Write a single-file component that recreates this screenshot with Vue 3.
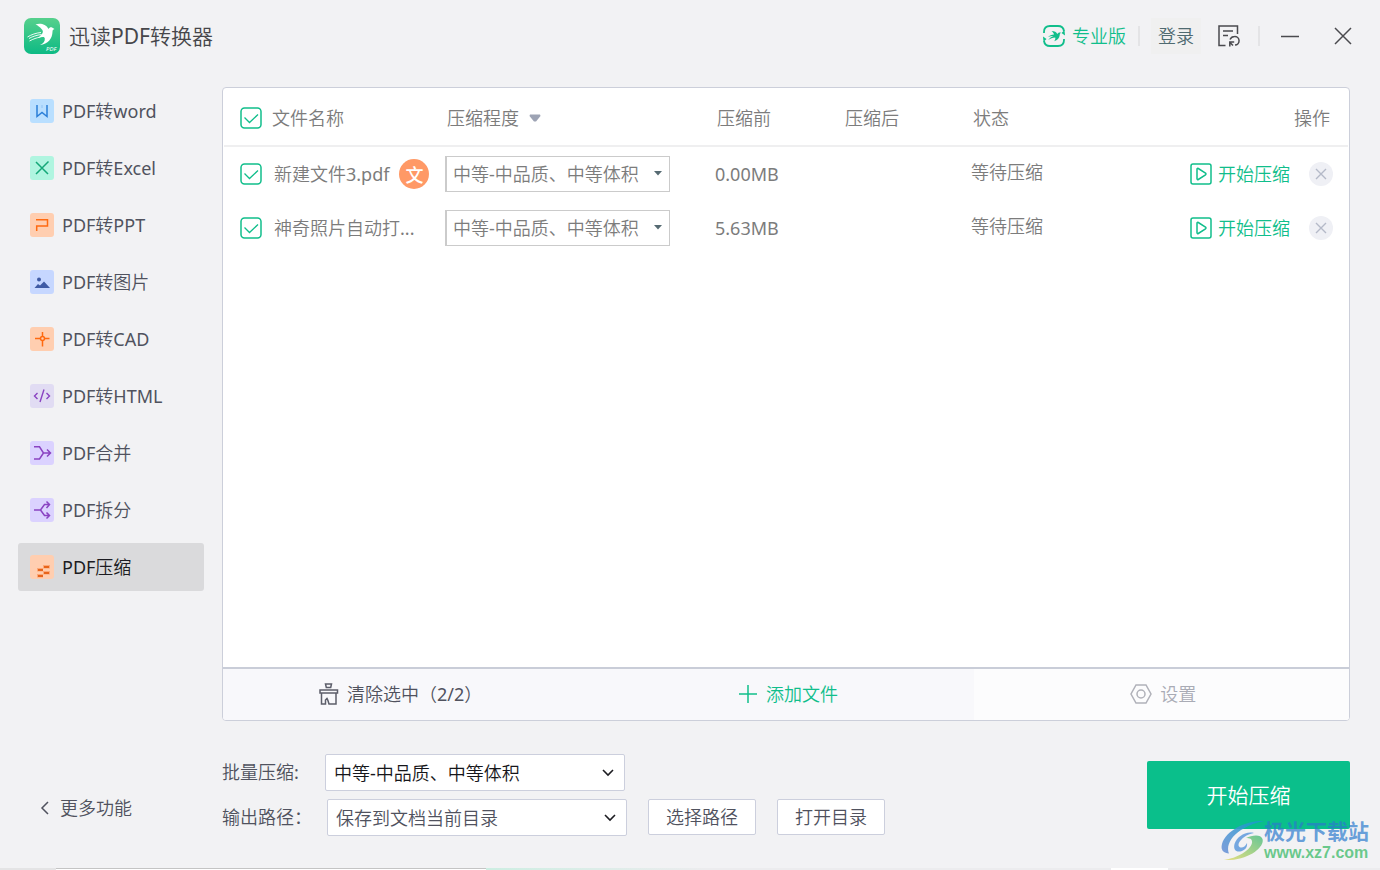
<script setup>
import { ref, computed } from 'vue'

const menu = [
  { id: 'word', label: 'PDF转word' },
  { id: 'excel', label: 'PDF转Excel' },
  { id: 'ppt', label: 'PDF转PPT' },
  { id: 'image', label: 'PDF转图片' },
  { id: 'cad', label: 'PDF转CAD' },
  { id: 'html', label: 'PDF转HTML' },
  { id: 'merge', label: 'PDF合并' },
  { id: 'split', label: 'PDF拆分' },
  { id: 'compress', label: 'PDF压缩' }
]
const current = ref('compress')

const levels = ['中等-中品质、中等体积', '高-低品质、小体积', '低-高品质、大体积']
const batchLevel = ref(levels[0])
const paths = ['保存到文档当前目录', '自定义目录']
const path = ref(paths[0])

const files = ref([
  { id: 1, name: '新建文件3.pdf', badge: '文', level: levels[0], before: '0.00MB', after: '', status: '等待压缩', checked: true },
  { id: 2, name: '神奇照片自动打...', badge: '', level: levels[0], before: '5.63MB', after: '', status: '等待压缩', checked: true }
])
const selected = computed(() => files.value.filter(f => f.checked).length)
const allChecked = computed({
  get: () => files.value.length > 0 && selected.value === files.value.length,
  set: v => files.value.forEach(f => { f.checked = v })
})
function remove(id) {
  files.value = files.value.filter(f => f.id !== id)
}
function clearSelected() {
  files.value = files.value.filter(f => !f.checked)
}
</script>

<template>
  <div class="app">
    <header class="topbar">
      <svg class="logo" viewBox="0 0 36 36" aria-hidden="true">
        <defs>
          <linearGradient id="logoFill" x1="0" y1="0" x2="0" y2="1">
            <stop offset="0" stop-color="#56d08c" />
            <stop offset="1" stop-color="#0dba84" />
          </linearGradient>
        </defs>
        <rect width="36" height="36" rx="7" fill="url(#logoFill)" />
        <path fill="#fff" d="M11.500 6.500C16 5 22 6 24.500 11c.8-1.500 2.300-2.200 3.600-1.500l2.400 1.500c-1.500.5-2 1.300-2 2.700-.2 7-4.500 12.300-12.500 13.300 3.500-1.600 5-3.600 4.800-6.500-.1-1.200-.8-1.700-2-1.600-1.500 0-3 .3-4.300.8 1.600-1.600 2.700-2.600 3.800-4.200 1-1.600.7-3.200-.8-4.500-1.700-2-3.500-3.500-6-4.500z" />
        <path stroke="#fff" stroke-width=".9" fill="none" d="M17 14.500C12 15 7.500 16.500 3.500 19M17.500 16.500C13 17 8.500 18.500 5 20.500M16.500 19C13 19.700 9 21 5.500 23" />
        <text x="22" y="33" class="logo-text">PDF</text>
      </svg>
      <h1 class="title">迅读PDF转换器</h1>
      <div class="top-actions">
        <button class="plain pro" type="button">
          <svg width="22" height="22" viewBox="0 0 22 22" fill="none" stroke="#10be8b" stroke-width="1.800" aria-hidden="true">
            <path d="M1 8V7c0-4 2-6 6-6h8c3.500 0 5.500 1.500 6 5M21 14v1c0 4-2 6-6 6H7c-3.500 0-5.500-1.500-6-5" />
            <path fill="#10be8b" stroke="none" d="M0 11.500l3.500 2.500L.5 17zM22 10.500L18.500 8 21.500 5zM8.500 6c3 0 5 1 5.800 3 .8-1.500 2.200-2 3.700-1.200-1 .5-1.200 1.400-1.300 2.400-.3 2.900-2.300 5-5.500 6 1-1.400 1.400-2.500 1-3.700-2.600.2-4.800 1-6.900 2.500 1.300-2.200 3-3.400 5.200-4.100-1.800 0-3.500.3-5.500 1.100 1.500-1.400 3.700-2.200 6-2.400-.3-1.400-1.100-2.500-2.500-3.600z" />
          </svg>
          专业版
        </button>
        <span class="divider"></span>
        <button class="plain login" type="button">登录</button>
        <button class="plain history" type="button" aria-label="记录">
          <svg width="22" height="22" viewBox="0 0 22 22" fill="none" stroke="#4a4a4e" stroke-width="1.500" aria-hidden="true">
            <path d="M7.500 20.500H1V1h18.500v8M5 6h10M5 10.500h5" />
            <path d="M12 14.500c1-2 2.500-3 4.500-3a4.300 4.300 0 0 1 .5 8.600M11.800 21.500v-4.500h4.400M12 17.500l3 3" />
          </svg>
        </button>
        <span class="divider"></span>
        <button class="plain minimise" type="button" aria-label="最小化">
          <svg width="18" height="18" viewBox="0 0 18 18" aria-hidden="true"><path d="M0 9.500h18" stroke="#4a4a4e" stroke-width="1.500" /></svg>
        </button>
        <button class="plain close" type="button" aria-label="关闭">
          <svg width="18" height="18" viewBox="0 0 18 18" aria-hidden="true"><path d="M1 1l16 16M17 1L1 17" stroke="#4a4a4e" stroke-width="1.500" /></svg>
        </button>
      </div>
    </header>

    <div class="body">
      <aside class="sidebar">
        <nav class="menu">
          <button
            v-for="item in menu" :key="item.id" type="button"
            class="plain menu-item" :class="{ active: current === item.id }"
            @click="current = item.id"
          >
            <svg class="menu-icon" viewBox="0 0 24 24" fill="none" aria-hidden="true">
              <g v-if="item.id === 'word'">
                <rect width="24" height="24" rx="3" fill="#b9dfff" />
                <path d="M7 6v11.500l5-4 5 4V6" stroke="#2a7fd8" stroke-width="1.500" />
                <path d="M12 6v3" stroke="#8fc2f3" />
              </g>
              <g v-else-if="item.id === 'excel'">
                <rect width="24" height="24" rx="3" fill="#b0f5e0" />
                <path d="M6 6l12 12M18.500 5.500L6 18" stroke="#14a878" stroke-width="1.500" />
              </g>
              <g v-else-if="item.id === 'ppt'">
                <rect width="24" height="24" rx="3" fill="#ffceb0" />
                <path d="M6 6.700h11.500V13H6.700v5" stroke="#ff6a10" stroke-width="1.500" />
              </g>
              <g v-else-if="item.id === 'image'">
                <rect width="24" height="24" rx="3" fill="#c6d7ff" />
                <circle cx="9" cy="9.500" r="2" fill="#3f5ba5" />
                <path d="M4.500 18l3.500-4 2 1.500 4-4 6 6.500z" fill="#3f5ba5" />
              </g>
              <g v-else-if="item.id === 'cad'">
                <rect width="24" height="24" rx="3" fill="#ffceb0" />
                <path d="M12.500 5v5m0 4v5.500M5 11.500h5.500m4 0h5" stroke="#ff6a10" stroke-width="1.500" />
                <circle cx="12.500" cy="11.500" r="2" stroke="#ff6a10" stroke-width="1.500" />
              </g>
              <g v-else-if="item.id === 'html'">
                <rect width="24" height="24" rx="3" fill="#e1dcf3" />
                <path d="M7.500 9l-3 3 3 3M16.500 9l3 3-3 3M14 5.500l-4 12.500" stroke="#8a43c2" stroke-width="1.400" />
              </g>
              <g v-else-if="item.id === 'merge'">
                <rect width="24" height="24" rx="3" fill="#dbd2ff" />
                <path d="M4 5.800h5.500L13.500 12l-4 6H4M13.500 12H20M17 8.500l3.500 3.500-3.500 3.500" stroke="#8a43c2" stroke-width="1.500" />
              </g>
              <g v-else-if="item.id === 'split'">
                <rect width="24" height="24" rx="3" fill="#dbd2ff" />
                <path d="M4 12h6.500M10.500 12l4-5.500h5M10.500 12l4 5.500h5M16.500 3.500l3 3-3 3.500M16.500 14.500l3 3-3 3" stroke="#8a43c2" stroke-width="1.500" />
              </g>
              <g v-else>
                <rect width="24" height="24" rx="3" fill="#ffceb0" />
                <path d="M13 10h7v3.500h-7zM7 13h6v3.500H7zM13 16h7v3.500h-7zM7 19h6v3.500H7z" fill="#fba878" />
                <path d="M14 11h5v2h-5zM8 14h5v2H8zM14 17h5v2h-5zM8 20h5v2H8z" fill="#e8641a" />
              </g>
            </svg>
            {{ item.label }}
          </button>
        </nav>
        <button class="plain more" type="button">
          <svg width="9" height="14" viewBox="0 0 9 14" fill="none" aria-hidden="true"><path d="M8 1L2 7l6 6" stroke="#50525e" stroke-width="1.500" /></svg>
          更多功能
        </button>
      </aside>

      <main class="main">
        <section class="panel">
          <div class="table-area">
            <table class="files">
              <colgroup>
                <col class="c-name"><col class="c-level"><col class="c-before"><col class="c-after"><col class="c-status"><col class="c-action">
              </colgroup>
              <thead>
                <tr>
                  <th scope="col">
                    <label class="check head-check">
                      <span class="tick">
                        <input v-model="allChecked" type="checkbox">
                        <svg viewBox="0 0 22 22" fill="none" stroke="#10be8b" aria-hidden="true">
                          <rect x="1" y="1" width="20" height="20" rx="3.500" stroke-width="1.500" />
                          <path v-if="allChecked" d="M4.500 10.500l5 5 8.500-8" stroke-width="1.300" />
                        </svg>
                      </span>
                      文件名称
                    </label>
                  </th>
                  <th scope="col" class="level-head">
                    压缩程度
                    <svg width="12" height="8" viewBox="0 0 12 8" aria-hidden="true"><path d="M1 .5h10l.5 1.500L7 7.500H5L.5 2z" fill="#9da3b4" /></svg>
                  </th>
                  <th scope="col" class="inset">压缩前</th>
                  <th scope="col" class="inset">压缩后</th>
                  <th scope="col" class="inset">状态</th>
                  <th scope="col" class="action-head">操作</th>
                </tr>
              </thead>
              <tbody>
                <tr v-for="f in files" :key="f.id">
                  <td>
                    <div class="name-cell">
                      <label class="check">
                        <span class="tick">
                          <input v-model="f.checked" type="checkbox">
                          <svg viewBox="0 0 22 22" fill="none" stroke="#10be8b" aria-hidden="true">
                            <rect x="1" y="1" width="20" height="20" rx="3.500" stroke-width="1.500" />
                            <path v-if="f.checked" d="M4.500 10.500l5 5 8.500-8" stroke-width="1.300" />
                          </svg>
                        </span>
                        {{ f.name }}
                      </label>
                      <span v-if="f.badge" class="badge">{{ f.badge }}</span>
                    </div>
                  </td>
                  <td>
                    <div class="row-select">
                      <select v-model="f.level" aria-label="压缩程度">
                        <option v-for="l in levels" :key="l">{{ l }}</option>
                      </select>
                      <svg width="8" height="5" viewBox="0 0 8 5" aria-hidden="true"><path d="M0 0h8L4 4.500z" fill="#566a72" /></svg>
                    </div>
                  </td>
                  <td>{{ f.before }}</td>
                  <td>{{ f.after }}</td>
                  <td class="status">{{ f.status }}</td>
                  <td>
                    <div class="row-actions">
                      <button class="plain start" type="button">
                        <svg width="22" height="22" viewBox="0 0 22 22" fill="none" stroke="#10be8b" stroke-width="1.500" aria-hidden="true">
                          <rect x="1" y="1" width="20" height="20" rx="2" />
                          <path d="M7 6.200c0-.7.700-1 1.300-.7l7.200 4.700c.6.400.6 1.200 0 1.600l-7.200 4.700c-.6.300-1.300 0-1.300-.7z" />
                        </svg>
                        开始压缩
                      </button>
                      <button class="plain remove" type="button" aria-label="移除" @click="remove(f.id)">
                        <svg width="24" height="24" viewBox="0 0 24 24" aria-hidden="true">
                          <circle cx="12" cy="12" r="12" fill="#eff0f5" />
                          <path d="M7 7l10 10M17 7L7 17" stroke="#b4b9c8" stroke-width="1.400" />
                        </svg>
                      </button>
                    </div>
                  </td>
                </tr>
              </tbody>
            </table>
          </div>
          <div class="toolbar">
            <button class="plain tool clear" type="button" @click="clearSelected">
              <svg width="20" height="22" viewBox="0 0 20 22" fill="none" stroke="#5c5e6a" stroke-width="1.500" aria-hidden="true">
                <path d="M6.500 1h6l-.8 3.500H7.300zM1 7h17.500v3H1zM2.500 10v11h4v-4l1.500-1.500c1 1.500 1.500 3.500 2 5.500h7V10" />
              </svg>
              清除选中（{{ selected }}/{{ files.length }}）
            </button>
            <button class="plain tool add" type="button">
              <svg width="20" height="20" viewBox="0 0 20 20" aria-hidden="true"><path d="M10 1v18M1 10h18" stroke="#10be8b" stroke-width="1.500" /></svg>
              添加文件
            </button>
            <button class="plain tool settings" type="button">
              <svg width="22" height="20" viewBox="0 0 22 20" fill="none" stroke="#b0b1b9" stroke-width="1.500" aria-hidden="true">
                <path d="M6 1h10l5 9-5 9H6l-5-9z" /><circle cx="11" cy="10" r="4" />
              </svg>
              设置
            </button>
          </div>
        </section>

        <section class="options">
          <div class="fields">
            <div class="field">
              <label class="batch-label" for="batch">批量压缩:</label>
              <div class="big-select strong">
                <select id="batch" v-model="batchLevel">
                  <option v-for="l in levels" :key="l">{{ l }}</option>
                </select>
                <svg width="12" height="8" viewBox="0 0 12 8" fill="none" aria-hidden="true"><path d="M1 1l5 5 5-5" stroke="#1d1d22" stroke-width="1.600" /></svg>
              </div>
            </div>
            <div class="field">
              <label class="path-label" for="path">输出路径：</label>
              <div class="big-select">
                <select id="path" v-model="path">
                  <option v-for="p in paths" :key="p">{{ p }}</option>
                </select>
                <svg width="12" height="8" viewBox="0 0 12 8" fill="none" aria-hidden="true"><path d="M1 1l5 5 5-5" stroke="#1d1d22" stroke-width="1.600" /></svg>
              </div>
              <button class="outline" type="button">选择路径</button>
              <button class="outline" type="button">打开目录</button>
            </div>
          </div>
          <button class="primary" type="button">开始压缩</button>
        </section>
      </main>
    </div>

    <div class="edge" aria-hidden="true">
      <span class="edge-a"></span><span class="edge-b"></span><span class="edge-c"></span><span class="edge-d"></span><span class="edge-e"></span>
    </div>

    <div class="watermark">
      <svg width="43" height="42" viewBox="0 0 43 42" aria-hidden="true">
        <defs>
          <linearGradient id="swirlBlue" x1="0" y1="1" x2="1" y2="0">
            <stop offset="0" stop-color="#6a8fd6" /><stop offset="1" stop-color="#169bd0" />
          </linearGradient>
          <linearGradient id="swirlGreen" x1="0" y1="1" x2="1" y2="0">
            <stop offset="0" stop-color="#e6dc6c" /><stop offset="1" stop-color="#4fbf85" />
          </linearGradient>
        </defs>
        <path fill="url(#swirlBlue)" d="M43 1C26 0 5 10 1 24c-1.500 6 1 9 7 9.500C5 27 9 17 20 10 28 5 36 2 43 1z" />
        <path fill="#5f9bdd" d="M33 13c-9-2-17 4-19.500 11-1.500 6 2 9 7.500 7 4-1.500 5.500-4.500 5-8-2 4-5 5.500-7.500 4C15 24 22 15 33 13z" />
        <path fill="url(#swirlGreen)" d="M25 18c6-3 15-4 16.500 1C44 27 27 41 3 40c13-2 26-9 28-17 .5-4-2-5-6-5z" />
      </svg>
      <div class="mark-text">
        <span class="mark-name">极光下载站</span>
        <span class="mark-url">www.xz7.com</span>
      </div>
    </div>
  </div>
</template>

<style>
body {
  background: #f2f2f4;
}
</style>

<style scoped>
.app {
  position: relative;
  box-sizing: border-box;
  min-height: 100vh;
  display: flex;
  flex-direction: column;
  background: #f2f2f4;
  color: #50525e;
  font-family: "Noto Sans", "Noto Sans CJK SC DemiLight", "Noto Sans CJK SC Light", "Noto Sans CJK SC", sans-serif;
  font-size: 18px;
  font-weight: 400;
  line-height: 24px;
}
.app *,
.app *::before {
  box-sizing: border-box;
}
button,
select {
  font: inherit;
  color: inherit;
}
svg {
  display: block;
  flex: none;
}
.plain {
  display: flex;
  align-items: center;
  padding: 0;
  border: 0;
  background: none;
  white-space: nowrap;
  cursor: pointer;
}

/* title bar */
.topbar {
  display: flex;
  align-items: center;
  height: 72px;
  padding: 0 28px 0 24px;
}
.logo {
  width: 36px;
  height: 36px;
}
.logo-text {
  fill: #fff;
  font-size: 6px;
  font-style: italic;
}
.title {
  margin: 0 auto 0 9px;
  color: #46464a;
  font-size: 21px;
  font-weight: inherit;
}
.top-actions {
  display: flex;
  align-items: center;
}
.pro {
  gap: 7px;
  color: #10be8b;
}
.divider {
  width: 2px;
  height: 20px;
  margin: 0 11px 0 12px;
  background: #e4e4e6;
}
.login {
  height: 36px;
  padding: 0 7px;
  background: #f0f0f0;
  color: #4f6a70;
}
.history {
  margin: 0 6px 0 17px;
}
.minimise {
  margin: 0 35px 0 10px;
}

/* sidebar */
.body {
  flex: 1;
  display: flex;
  padding-top: 15px;
}
.sidebar {
  flex: none;
  display: flex;
  flex-direction: column;
  justify-content: space-between;
  width: 222px;
  padding: 0 18px 36px;
}
.menu {
  display: flex;
  flex-direction: column;
  gap: 9px;
}
.menu-item {
  height: 48px;
  gap: 8px;
  padding-left: 12px;
  border-radius: 3px;
}
.menu-item.active {
  background: #dadadc;
  color: #1c1c22;
}
.menu-icon {
  width: 24px;
  height: 24px;
}
.more {
  height: 48px;
  gap: 11px;
  padding-left: 22px;
}

/* file table */
.main {
  flex: 1;
  min-width: 0;
  display: flex;
  flex-direction: column;
  padding-right: 30px;
}
.panel {
  flex: 1;
  display: flex;
  flex-direction: column;
  border: 1px solid #cccfda;
  border-radius: 4px;
  background: #fff;
  overflow: hidden;
}
.table-area {
  flex: 1;
  padding: 0 1px;
}
.files {
  width: 100%;
  table-layout: fixed;
  border-collapse: separate;
  border-spacing: 0;
  color: #7c7c7c;
}
.c-name { width: 221px; }
.c-level { width: 270px; }
.c-before { width: 128px; }
.c-after { width: 128px; }
.c-status { width: 180px; }
th {
  height: 59px;
  padding: 3px 0 0;
  border-bottom: 2px solid #efeff0;
  font-weight: inherit;
  text-align: left;
  white-space: nowrap;
}
td {
  height: 54px;
  padding: 0;
  white-space: nowrap;
}
.inset,
.level-head {
  padding-left: 2px;
}
.level-head svg {
  display: inline-block;
  margin-left: 5px;
  vertical-align: 3px;
}
th.action-head {
  padding-right: 18px;
  text-align: right;
}
td.status {
  padding-bottom: 5px;
}
.name-cell {
  display: flex;
  align-items: center;
  gap: 10px;
}
.check {
  display: flex;
  align-items: center;
  gap: 12px;
  padding-left: 16px;
}
.head-check {
  gap: 10px;
}
.tick {
  position: relative;
  width: 22px;
  height: 22px;
}
.tick input {
  position: absolute;
  inset: 0;
  width: 100%;
  height: 100%;
  margin: 0;
  opacity: 0;
  cursor: pointer;
}
.badge {
  width: 30px;
  height: 30px;
  border-radius: 50%;
  background: #ff9966;
  color: #fff;
  font-family: "Noto Sans CJK SC", sans-serif;
  font-weight: 500;
  line-height: 30px;
  text-align: center;
}
.row-select {
  position: relative;
  width: 225px;
}
.row-select select {
  display: block;
  width: 100%;
  height: 36px;
  padding: 0 24px 0 6px;
  border: 2px solid #cbcbcb;
  border-width: 1px 1px 1px 2px;
  background: #fff;
  appearance: none;
}
.row-select svg {
  position: absolute;
  right: 8px;
  top: 15px;
  pointer-events: none;
}
.row-actions {
  display: flex;
  justify-content: flex-end;
  gap: 19px;
  padding-right: 15px;
}
.start {
  gap: 6px;
  color: #10be8b;
}

/* panel toolbar */
.toolbar {
  display: grid;
  grid-template-columns: repeat(3, 1fr);
  border-top: 2px solid #c9cdd8;
  background: #f8f8fb;
}
.tool {
  justify-content: center;
  height: 51px;
  gap: 8px;
  padding-bottom: 2px;
}
.clear {
  padding-right: 20px;
}
.add {
  padding-left: 4px;
  color: #10be8b;
}
.settings {
  padding-left: 4px;
  background: #fcfcfd;
  color: #a9abb5;
}

/* output options */
.options {
  display: flex;
  justify-content: space-between;
  padding: 33px 0 32px;
}
.fields {
  display: flex;
  flex-direction: column;
  gap: 8px;
}
.field {
  display: flex;
  align-items: flex-start;
  line-height: 36px;
}
.batch-label {
  width: 103px;
}
.path-label {
  width: 105px;
}
.big-select {
  position: relative;
  width: 300px;
}
.big-select select {
  display: block;
  width: 100%;
  height: 37px;
  padding: 0 36px 0 8px;
  border: 1px solid #cccfdd;
  border-radius: 2px;
  background: #fff;
  appearance: none;
}
.big-select.strong {
  color: #16161a;
}
.big-select svg {
  position: absolute;
  right: 11px;
  top: 15px;
  pointer-events: none;
}
.outline {
  width: 108px;
  height: 36px;
  margin-left: 21px;
  padding: 0;
  border: 1px solid #cccfdd;
  border-radius: 2px;
  background: #fff;
  line-height: 24px;
}
.primary {
  width: 203px;
  height: 68px;
  margin-top: 7px;
  border: 0;
  border-radius: 2px;
  background: #0abf8b;
  color: #fff;
  font-size: 21px;
}

/* strip along the lower window edge */
.edge {
  display: flex;
  height: 2px;
  background: #ececee;
}
.edge-a { width: 56px; background: #e4e4e5; }
.edge-b { width: 430px; border-top: 1px solid #c4c4c4; background: #fff; }
.edge-c { width: 220px; background: linear-gradient(90deg, #cdeee2, #ececee); }
.edge-d { flex: 1; }
.edge-e { width: 57px; margin-right: 212px; background: #fff; }

.watermark {
  position: absolute;
  right: 11px;
  bottom: 8px;
  display: flex;
  align-items: center;
  pointer-events: none;
}
.mark-text {
  display: flex;
  flex-direction: column;
}
.mark-name {
  color: rgba(42, 122, 205, 0.7);
  font-family: "Liberation Sans", "Noto Sans CJK SC", sans-serif;
  font-size: 21px;
  font-weight: 700;
  line-height: 24px;
}
.mark-url {
  color: rgba(60, 186, 104, 0.75);
  font-family: "Liberation Sans", sans-serif;
  font-size: 16px;
  font-weight: 700;
  line-height: 18px;
}
.watermark svg {
  opacity: 0.85;
}
</style>
